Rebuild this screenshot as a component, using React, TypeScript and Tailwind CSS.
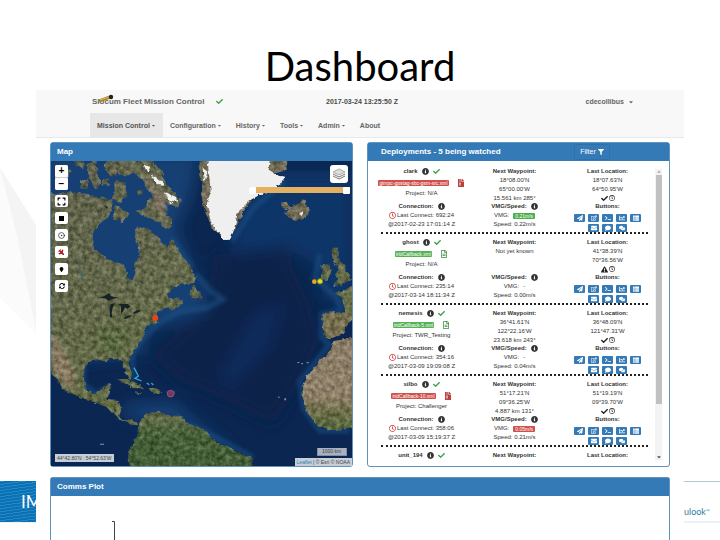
import type { ReactNode } from "react";
import {
  FaCaretDown, FaChartLine, FaCheck, FaComment, FaComments, FaEnvelope, FaExclamationTriangle,
  FaExpand, FaFileArchive, FaFilter, FaInfoCircle, FaPaperPlane, FaRegClock, FaRegEdit,
  FaRegFileAlt, FaSyncAlt, FaTerminal, FaThList, FaMapMarker, FaSquareFull, FaPlane,
} from "react-icons/fa";
import { CircleDot } from "lucide-react";

type Deployment = {
  name: string;
  script: string;
  alert?: boolean;
  project: string;
  connect: string;
  at: string;
  waypoint: string[];
  location: string[];
  warn?: boolean;
  vmg: string;
  vmgTone?: "good" | "bad";
  speed: string;
};

const deployments: Deployment[] = [
  {
    name: "clark", script: "gimpc-gpstag-sbc-gsm-src.xml", alert: true, project: "N/A",
    connect: "692:24", at: "@2017-02-23 17:01:14 Z",
    waypoint: ["18°08.00'N", "65°00.00'W", "15.561 km 285°"], location: ["18°07.63'N", "64°50.95'W"],
    vmg: "0.21m/s", vmgTone: "good", speed: "0.22m/s",
  },
  {
    name: "ghost", script: "iridCallback.xml", project: "N/A",
    connect: "235:14", at: "@2017-03-14 18:11:34 Z",
    waypoint: ["Not yet known"], location: ["41°38.39'N", "70°36.56'W"], warn: true,
    vmg: "-", speed: "0.00m/s",
  },
  {
    name: "nemesis", script: "iridCallback-5.xml", project: "TWR_Testing",
    connect: "354:16", at: "@2017-03-09 19:09:08 Z",
    waypoint: ["36°41.61'N", "122°22.16'W", "23.618 km 243°"], location: ["36°48.09'N", "121°47.31'W"],
    vmg: "-", speed: "0.04m/s",
  },
  {
    name: "silbo", script: "iridCallback-10.xml", alert: true, project: "Challenger",
    connect: "358:06", at: "@2017-03-09 15:19:37 Z",
    waypoint: ["51°17.21'N", "09°36.25'W", "4.887 km 131°"], location: ["51°19.19'N", "09°39.70'W"],
    vmg: "0.05m/s", vmgTone: "bad", speed: "0.21m/s",
  },
];

const navItems = ["Mission Control", "Configuration", "History", "Tools", "Admin"];

const actions = [
  { label: "Send", icon: FaPaperPlane },
  { label: "Edit", icon: FaRegEdit },
  { label: "Terminal", icon: FaTerminal },
  { label: "Plot", icon: FaChartLine },
  { label: "List", icon: FaThList },
  { label: "Mail", icon: FaEnvelope },
  { label: "Comment", icon: FaComment },
  { label: "Comments", icon: FaComments },
];

function ActionRow({ items }: { items: typeof actions }) {
  return (
    <div className="flex justify-center gap-[3px]">
      {items.map(({ label, icon: Icon }) => (
        <button key={label} aria-label={label} className="flex h-2 w-[11px] items-center justify-center rounded-[1px] bg-[#337ab7] text-white">
          <Icon size={6} />
        </button>
      ))}
    </div>
  );
}

function Line({ bold, children }: { bold?: boolean; children: ReactNode }) {
  return (
    <div className={`flex h-[9px] items-center justify-center gap-1 whitespace-nowrap ${bold ? "font-bold" : ""}`}>
      {children}
    </div>
  );
}

function NameLine({ name }: { name: string }) {
  return (
    <Line bold>
      {name}
      <FaInfoCircle size={7} />
      <FaCheck size={7} className="text-[#3fa34d]" />
    </Line>
  );
}

function DeploymentRow({ d }: { d: Deployment }) {
  return (
    <article className="pt-1">
      <div className="grid grid-cols-3">
        <div>
          <div className="h-[35px]">
            <NameLine name={d.name} />
            <div className="flex h-[13px] items-center justify-center gap-2">
              <span className={`rounded-[1px] px-px text-[5px] leading-[6px] whitespace-nowrap text-white ${d.alert ? "bg-[#d0504c]" : "bg-[#55b155]"}`}>
                {d.script}
              </span>
              {d.alert
                ? <FaFileArchive size={8} className="shrink-0 text-[#b8423f]" />
                : <FaRegFileAlt size={8} className="shrink-0 text-[#3c8a40]" />}
            </div>
            <Line>Project: {d.project}</Line>
          </div>
          <Line bold>
            Connection: <FaInfoCircle size={7} />
          </Line>
          <div className="flex h-[9px] items-center justify-center gap-px whitespace-nowrap">
            <FaRegClock size={7} className="text-[#d0302c]" /> Last Connect: {d.connect}
          </div>
          <Line>{d.at}</Line>
        </div>
        <div>
          <div className="h-[35px]">
            <Line bold>Next Waypoint:</Line>
            {d.waypoint.map((w) => <Line key={w}>{w}</Line>)}
          </div>
          <Line bold>
            VMG/Speed: <FaInfoCircle size={7} />
          </Line>
          <Line>
            <span>VMG:</span>
            {d.vmgTone ? (
              <span className={`rounded-[1px] px-0.5 text-[5px] leading-[6px] text-white ${d.vmgTone === "good" ? "bg-[#4cae4c]" : "bg-[#d0504c]"}`}>
                {d.vmg}
              </span>
            ) : <span>{d.vmg}</span>}
          </Line>
          <Line>Speed: {d.speed}</Line>
        </div>
        <div>
          <div className="h-[35px]">
            <Line bold>Last Location:</Line>
            {d.location.map((l) => <Line key={l}>{l}</Line>)}
            <div className="flex h-2 items-center justify-center gap-px text-[#222]">
              {d.warn ? <FaExclamationTriangle size={7} /> : <FaCheck size={7} />}
              <FaRegClock size={6} />
            </div>
          </div>
          <Line bold>Buttons:</Line>
          <div className="flex flex-col gap-0.5 pt-[3px]">
            <ActionRow items={actions.slice(0, 5)} />
            <ActionRow items={actions.slice(5)} />
          </div>
        </div>
      </div>
      <hr className="mx-1.5 border-t-2 border-dotted border-[#222]" />
    </article>
  );
}

function Satellite() {
  return (
    <svg className="block h-[305px] w-full" viewBox="33 60 903 915" preserveAspectRatio="xMidYMid slice" aria-label="Atlantic map">
      <defs>
        <linearGradient id="west" gradientUnits="userSpaceOnUse" x1="60" y1="120" x2="330" y2="780">
          <stop offset="0" stopColor="#64664f" />
          <stop offset="0.5" stopColor="#666b4e" />
          <stop offset="1" stopColor="#667048" />
        </linearGradient>
        <linearGradient id="south" x1="0" y1="0" x2="0" y2="1">
          <stop offset="0" stopColor="#6b7150" />
          <stop offset="0.4" stopColor="#48623a" />
          <stop offset="1" stopColor="#415e37" />
        </linearGradient>
        <linearGradient id="africa" x1="0" y1="0" x2="0" y2="1">
          <stop offset="0" stopColor="#8c7f6a" />
          <stop offset="0.62" stopColor="#93836d" />
          <stop offset="0.78" stopColor="#73734f" />
          <stop offset="1" stopColor="#55693d" />
        </linearGradient>
        <filter id="soft" x="-30%" y="-30%" width="160%" height="160%"><feGaussianBlur stdDeviation="22" /></filter>
        <filter id="shelf" x="-10%" y="-10%" width="120%" height="120%"><feGaussianBlur stdDeviation="7" /></filter>
        <filter id="terrain" filterUnits="userSpaceOnUse" x="33" y="60" width="903" height="915" colorInterpolationFilters="sRGB">
          <feTurbulence type="fractalNoise" baseFrequency="0.06" numOctaves="3" seed="7" result="coast" />
          <feDisplacementMap in="SourceGraphic" in2="coast" scale="14" xChannelSelector="R" yChannelSelector="G" result="land" />
          <feTurbulence type="fractalNoise" baseFrequency="0.07" numOctaves="4" seed="3" result="n" />
          <feColorMatrix in="n" type="matrix" values="0.9 0 0 0 0.03  0.85 0.05 0 0 0.03  0.8 0 0.1 0 0.02  0 0 0 0 1" result="grain" />
          <feBlend in="grain" in2="land" mode="soft-light" result="mix" />
          <feComposite in="mix" in2="land" operator="in" />
        </filter>
        <filter id="ragged" filterUnits="userSpaceOnUse" x="33" y="60" width="903" height="915" colorInterpolationFilters="sRGB">
          <feTurbulence type="fractalNoise" baseFrequency="0.06" numOctaves="3" seed="7" result="coast" />
          <feDisplacementMap in="SourceGraphic" in2="coast" scale="14" xChannelSelector="R" yChannelSelector="G" />
        </filter>
      </defs>
      <rect x="33" y="60" width="903" height="915" fill="#0b2650" />
      <g filter="url(#soft)">
        <path d="M0 40H480L450 180L410 260L440 340L480 440L530 470L520 500L420 540L330 560L300 640L100 660L60 500Z" fill="#153f73" />
        <path d="M590 200L700 90H940V520L850 470L830 370L720 310L640 400L570 330Z" fill="#0f3568" />
        <path d="M520 340L730 320L810 480L840 600L760 760L700 850L560 780L420 720L330 640L500 510Z" fill="#09204a" />
        <path d="M640 520L740 480L690 620L560 760L540 690Z" fill="#0f2a5a" />
        <path d="M240 790L400 780L480 850L600 940L420 860L260 830Z" fill="#174175" />
      </g>
      <g fill="none" stroke="#1f5288" strokeWidth="14" opacity=".65" filter="url(#shelf)">
        <path d="M468 400L510 450L550 475L500 500L420 510L350 550L310 590L275 640L280 720M395 290L455 380M132 675L130 730L170 760L210 735M440 850L510 880L640 950M575 300L640 200L735 120M840 340L825 410L890 470L905 510L845 520L845 590L870 610L780 720L790 800L840 870L930 870" />
      </g>
      <g filter="url(#terrain)">
        <g fill="url(#west)">
          <path d="M20 152L60 160L95 152L130 160L165 168L190 167L205 178L218 175L215 205L205 228L185 243L165 262L155 290L162 320L187 345L217 360L245 368L257 382L262 405L278 418L286 395L284 362L300 345L297 320L287 300L290 257L320 260L345 277L360 302L385 320L397 292L415 327L435 357L455 385L468 410L462 425L435 430L400 437L380 460L390 472L415 470L430 487L405 505L392 508L385 498L365 510L348 518L347 534L356 544L328 550L312 570L306 594L295 612L272 642L264 662L272 685L277 706L268 716L257 697L250 668L230 655L207 654L200 662L180 653L152 658L134 678L131 710L137 740L157 757L177 753L190 737L211 731L210 755L198 777L235 780L243 800L238 825L252 840L275 838L295 846L290 856L275 852L255 844L233 832L205 800L165 784L120 769L90 755L68 744L55 717L20 682Z" />
          <path d="M285 50L335 55L365 90L378 130L402 157L422 180L412 197L385 190L368 182L366 195L398 240L388 264L352 243L322 227L290 213L318 197L325 172L345 172L320 142L302 112L265 82Z" />
          <path d="M140 72L165 55L182 128L167 142L148 112ZM190 70L215 50L285 50L285 92L255 110L232 95L212 110ZM228 118L255 125L262 160L238 188L217 170ZM226 193L250 205L268 218L250 243L220 235ZM120 118L145 118L142 145L122 142ZM50 100L75 78L95 95L72 115ZM100 55L135 50L130 82L105 75ZM185 120L205 112L208 130L188 135ZM292 150L305 145L308 160L295 163ZM475 62L505 60L505 130L480 115Z" />
          <path d="M445 458L462 430L474 450L492 470L465 474ZM845 370L868 370L873 395L862 416L840 415L845 395ZM876 320L896 320L895 350L905 365L925 395L933 415L910 430L880 435L895 415L887 400L897 385L885 370L875 345ZM945 430L918 447L887 455L906 470L914 500L916 522L945 525Z" />
          <path d="M232 714L260 714L290 728L314 742L285 742L250 725ZM325 742L345 740L367 752L340 759ZM380 752L405 752L402 760L382 762ZM288 754L304 754L303 759L290 758Z" />
        </g>
        <g filter="url(#shelf)">
          <path d="M33 570L55 600L100 680L105 745L75 735L45 695L33 680Z" fill="#897b64" />
          <path d="M310 100L340 130L385 180L370 215L335 205L345 165Z" fill="#827766" />
          <path d="M180 560L270 550L250 630L200 640L160 610Z" fill="#5c6b42" />
        </g>
        <path d="M298 846L318 817L355 812L385 822L425 825L447 850L472 856L500 872L515 897L560 915L600 935L638 952V990H270L264 935L280 902L294 870Z" fill="url(#south)" />
        <path d="M945 515L905 514L850 515L847 537L850 582L867 592L907 582L922 552L945 532Z" fill="#7a7353" />
        <path d="M950 588L880 600L872 627L837 662L802 702L785 737L791 780L801 810L827 850L862 868L915 865L950 852Z" fill="url(#africa)" />
        <path d="M727 184L740 182L748 197L770 190L792 178L810 204L797 228L767 240L745 228L732 215L750 208L728 200Z" fill="#77705a" />
        <path d="M492 50H742L740 88L700 98L620 195L570 290L520 268L492 205L485 165Z" fill="#756e5a" />
      </g>
      <g fill="#efefef" filter="url(#ragged)">
        <path d="M502 50H690L686 88L710 103L735 107L722 130L665 158L630 178L612 195L592 215L587 250L572 296L556 297L526 268L512 240L500 190L512 150Z" />
        <path d="M310 70L330 80L322 95ZM335 100L365 120L372 135L350 130ZM370 150L408 168L415 185L388 176ZM774 218L793 211L784 226ZM487 80L503 92L493 122ZM385 178L400 184L396 190Z" />
      </g>
      <g fill="#182224">
        <path d="M176 470L192 466L207 456L214 466L234 470L220 473L205 479L196 472ZM212 489L225 487L218 500L215 515L217 530L210 528L209 505ZM233 488L250 489L264 489L271 497L262 504L255 499L250 511L243 518L243 495ZM250 531L262 524L274 522L274 526L257 534ZM278 516L290 508L301 506L299 512L284 518ZM190 191L204 199L201 203ZM221 801L230 809L225 811Z" />
      </g>
      <path d="M116 370L128 415M120 388L132 402" stroke="#3f6360" strokeWidth="5" opacity=".7" />
      <path d="M282 680L295 705L285 712L305 720M320 726L328 731M334 726L340 732" fill="none" stroke="#32a8cf" strokeWidth="4" />
      <g fill="#7b98aa"><path d="M772 663h6v3h-6zM784 666h5v4h-5zM800 663h6v4h-6zM714 767h5v3h-5zM733 772h5v6h-5zM180 908h12v3h-12z" /></g>
      <circle cx="346" cy="531" r="9" fill="#e8431c" />
      <circle cx="823" cy="422" r="7" fill="#e9a421" />
      <circle cx="840" cy="421" r="8" fill="#e8df25" stroke="#77851c" strokeWidth="3" />
      <circle cx="392" cy="758" r="10" fill="#70395e" stroke="#9a4c83" strokeWidth="3" />
    </svg>
  );
}

function MapButton({ label, children }: { label: string; children: ReactNode }) {
  return (
    <button aria-label={label} className="flex h-3 w-[13px] items-center justify-center rounded-[2px] bg-white text-black">
      {children}
    </button>
  );
}

const thumb =
  "absolute inset-0 h-[6px] w-full appearance-none bg-transparent [&::-webkit-slider-thumb]:h-[7px] [&::-webkit-slider-thumb]:w-[7px] [&::-webkit-slider-thumb]:appearance-none [&::-webkit-slider-thumb]:rounded-[1px] [&::-webkit-slider-thumb]:bg-white";

function Panel({ title, extra, grow, children }: { title: string; extra?: ReactNode; grow?: boolean; children: ReactNode }) {
  return (
    <section className={`flex flex-col border border-[#5f93bb] bg-white ${grow ? "flex-1 rounded-t-[3px] border-b-0" : "rounded-[3px]"}`}>
      <header className={`flex h-[18px] shrink-0 items-center justify-between bg-[#337ab7] pr-1.5 text-white ${extra ? "pl-[13px]" : "pl-1.5"}`}>
        <h2 className="text-[8px] leading-[10px] font-bold">{title}</h2>
        {extra}
      </header>
      {children}
    </section>
  );
}

export default function App() {
  return (
    <div className="relative flex min-h-screen flex-col bg-white font-['Liberation_Sans',Arial,sans-serif]">
      <svg className="absolute top-[160px] left-0 h-[180px] w-9" viewBox="0 0 36 180" aria-hidden="true">
        <path d="M0 8L36 65V173L0 138Z" fill="#fbfbfb" />
        <path d="M0 8L36 65V170L18 80Z" fill="#f4f4f4" />
      </svg>
      <div className="absolute inset-x-0 top-[481px] flex h-[42px] justify-between border-t border-b-2 border-t-[#aecbd2] border-b-[#edf1f6]">
        <div className="-mt-px h-[41px] w-9 overflow-hidden bg-[#0e76ba] bg-[repeating-linear-gradient(172deg,#2389c6_0_1px,#0b70b4_1px_3px)] pt-[11px] pl-[21px] font-[Lato,sans-serif] text-[17px] leading-5 text-white">
          IM
        </div>
        <div className="w-9 pt-6 font-[Lato,sans-serif] text-[9px] leading-3 text-[#2f7ea0]">
          ulook<sup className="text-[5px]">™</sup>
        </div>
      </div>

      <h1 className="h-[90px] pt-[42px] text-center font-[Lato,sans-serif] text-[40px] leading-[48px] text-black">Dashboard</h1>

      <main className="relative mx-9 flex flex-1 flex-col bg-white">
        <div className="border-b border-[#e9e9e9] bg-[#f8f8f8] pr-[50px] pl-[54px] text-[7px] leading-[9px] font-bold text-[#666]">
          <div className="grid h-[23px] grid-cols-[1fr_auto_1fr] items-center">
            <div className="relative flex items-center gap-3 pl-0.5">
              <span className="text-[8px] leading-[10px]">Slocum Fleet Mission Control</span>
              <FaCheck size={7} className="text-[#3ca545]" />
              <svg className="absolute -top-1 left-2 h-2.5 w-4" viewBox="0 0 16 10" aria-hidden="true">
                <path d="M1 8L12 4" stroke="#a5832d" strokeWidth="3" />
                <path d="M2 7L11 4" stroke="#dfbd45" strokeWidth="1" />
                <circle cx="13" cy="4" r="2.2" fill="#2b1f1c" />
              </svg>
            </div>
            <time className="text-[#4a4a4a]">2017-03-24 13:25:50 Z</time>
            <button className="flex items-center gap-1 justify-self-end">
              cdecollibus <FaCaretDown size={6} />
            </button>
          </div>
          <nav className="flex">
            {navItems.map((item, i) => (
              <button key={item} className={`flex h-6 items-center gap-px px-[7px] ${i === 0 ? "bg-[#e7e7e7] text-[#555]" : ""}`}>
                {item} <FaCaretDown size={5} />
              </button>
            ))}
            <a href="#about" className="flex h-6 items-center px-[7px]">About</a>
          </nav>
        </div>

        <div className="flex flex-1 flex-col gap-2.5 px-3.5 pt-1">
          <div className="grid grid-cols-2 gap-3.5">
            <Panel title="Map">
              <div className="relative overflow-hidden">
                <Satellite />
                <div className="absolute top-1 left-1 flex flex-col gap-[5px]">
                  <div className="flex flex-col gap-px rounded-[2px] bg-[#ccc]">
                    <MapButton label="Zoom in"><span className="text-[10px] leading-3 font-bold">+</span></MapButton>
                    <MapButton label="Zoom out"><span className="text-[10px] leading-3 font-bold">−</span></MapButton>
                  </div>
                  <MapButton label="Full screen"><FaExpand size={9} /></MapButton>
                  <MapButton label="Draw area"><FaSquareFull size={5} /></MapButton>
                  <MapButton label="Locate"><CircleDot size={7} /></MapButton>
                  <MapButton label="Clear tracks"><FaPlane size={7} className="rotate-45 text-[#a51d20]" /></MapButton>
                  <MapButton label="Marker"><FaMapMarker size={5} /></MapButton>
                  <MapButton label="Refresh"><FaSyncAlt size={6} /></MapButton>
                </div>
                <button aria-label="Layers" className="absolute top-1 right-1 flex h-[18px] w-[18px] items-center justify-center rounded-[3px] bg-white">
                  <svg className="h-3.5 w-3.5" viewBox="0 0 14 14" fill="none" stroke="#777" aria-hidden="true">
                    <path d="M1 9L7 12L13 9M1 7L7 10L13 7" />
                    <path d="M1 5L7 2L13 5L7 8Z" fill="#ddd" stroke="#aaa" />
                  </svg>
                </button>
                <div className="absolute top-[26px] right-0.5 h-[6px] w-[101px] bg-[#e4b062]">
                  <input type="range" aria-label="Start time" defaultValue={0} className={thumb} />
                  <input type="range" aria-label="End time" defaultValue={100} className={thumb} />
                </div>
                <div className="absolute bottom-1 left-1 bg-[#c6ced8] px-0.5 text-[5px] leading-2 text-[#444]">44°42.80'N : 54°52.63'W</div>
                <div className="absolute right-[5px] bottom-2.5 w-[30px] border border-t-0 border-[#848ea0] bg-[#a9b0bf] pl-1 text-[5px] leading-[7px] text-[#444]">1000 km</div>
                <div className="absolute right-0 bottom-0 bg-[#c6ced8] px-0.5 text-[5px] leading-2 whitespace-nowrap text-[#444]">
                  <a href="#leaflet" className="text-[#1888ae]">Leaflet</a> | © Esri © NOAA
                </div>
              </div>
            </Panel>

            <Panel
              title="Deployments - 5 being watched"
              extra={
                <button className="mr-[53px] flex h-4 w-9 items-center justify-center gap-0.5 border border-[#2f70ab] text-[7px]">
                  Filter <FaFilter size={6} />
                </button>
              }
            >
              <div className="flex h-[305px] pt-0.5 pr-[7px] pb-1.5 pl-[7px]">
                <div className="flex-1 text-[6px] leading-[9px] text-[#333]">
                  {deployments.map((d) => <DeploymentRow key={d.name} d={d} />)}
                  <article className="grid grid-cols-3 pt-1">
                    <NameLine name="unit_194" />
                    <Line bold>Next Waypoint:</Line>
                    <Line bold>Last Location:</Line>
                  </article>
                </div>
                <div className="mt-1.5 ml-px flex w-[7px] flex-col items-center bg-[#f3f3f3]">
                  <FaCaretDown size={6} className="rotate-180 text-[#aaa]" />
                  <div className="h-[229px] w-1.5 bg-[#c1c1c1]" />
                  <FaCaretDown size={6} className="mt-auto text-[#555]" />
                </div>
              </div>
            </Panel>
          </div>

          <Panel title="Comms Plot" grow>
            <svg className="mt-[25px] ml-[61px] block h-5 w-1" viewBox="0 0 4 20" aria-label="Comms plot axis">
              <path d="M0 .5H2.5V20" fill="none" stroke="#444" />
            </svg>
          </Panel>
        </div>
      </main>
    </div>
  );
}
